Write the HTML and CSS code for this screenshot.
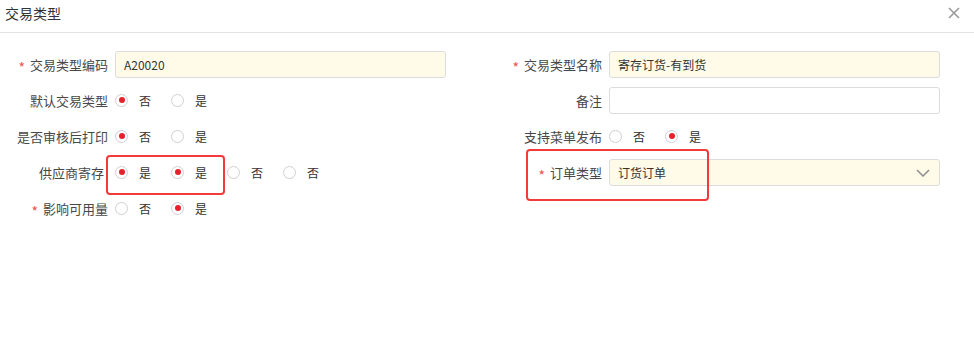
FILE: index.html
```html
<!DOCTYPE html>
<html>
<head lang="zh">
    <meta charset="UTF-8">
    <title>交易类型</title>
    <link rel="stylesheet" href="styles.css">
</head>
<body>
<div class="dialog">
    <div class="dialog-head">
        <span class="dialog-title">交易类型</span>
        <span class="close">
            <svg width="12" height="12" viewBox="0 0 12 12"><path d="M1 1 L11 11 M11 1 L1 11" stroke="#9a9a9a" stroke-width="1.6" fill="none"/></svg>
        </span>
    </div>
    <div class="form">
        <div class="field">
            <label class="lbl"><i class="req">*</i>交易类型编码</label>
            <div class="input">A20020</div>
        </div>
        <div class="field">
            <label class="lbl"><i class="req">*</i>交易类型名称</label>
            <div class="input">寄存订货-有到货</div>
        </div>

        <div class="field">
            <label class="lbl">默认交易类型</label>
            <div class="radios">
                <span class="opt"><span class="radio on"></span>否</span>
                <span class="opt"><span class="radio"></span>是</span>
            </div>
        </div>
        <div class="field">
            <label class="lbl">备注</label>
            <div class="input plain"></div>
        </div>

        <div class="field">
            <label class="lbl">是否审核后打印</label>
            <div class="radios">
                <span class="opt"><span class="radio on"></span>否</span>
                <span class="opt"><span class="radio"></span>是</span>
            </div>
        </div>
        <div class="field">
            <label class="lbl">支持菜单发布</label>
            <div class="radios">
                <span class="opt"><span class="radio"></span>否</span>
                <span class="opt"><span class="radio on"></span>是</span>
            </div>
        </div>

        <div class="field">
            <label class="lbl short">供应商寄存</label>
            <div class="radios">
                <span class="opt"><span class="radio on"></span>是</span>
                <span class="opt"><span class="radio on"></span>是</span>
                <span class="opt"><span class="radio"></span>否</span>
                <span class="opt"><span class="radio"></span>否</span>
            </div>
        </div>
        <div class="field">
            <label class="lbl"><i class="req">*</i>订单类型</label>
            <div class="input select">订货订单
                <svg class="caret" width="14" height="8" viewBox="0 0 14 8"><path d="M1 1 L7 7 L13 1" stroke="#8c8c8c" stroke-width="1.5" fill="none"/></svg>
            </div>
        </div>

        <div class="field">
            <label class="lbl"><i class="req">*</i>影响可用量</label>
            <div class="radios">
                <span class="opt"><span class="radio"></span>否</span>
                <span class="opt"><span class="radio on"></span>是</span>
            </div>
        </div>

        <div class="mark mark-left"></div>
        <div class="mark mark-right"></div>
    </div>
</div>
</body>
</html>
```

FILE: styles.css
```css
body {
    margin: 0px;
    background: #fff;
    font-family: "Noto Sans CJK SC", "Liberation Sans", sans-serif;
    color: #333;
}
.dialog {
    width: 974px;
    height: 337px;
    background: #fff;
}
.dialog-head {
    height: 33px;
    box-sizing: border-box;
    border-bottom: 1px solid #e3e3e3;
    display: flex;
    justify-content: space-between;
    align-items: flex-start;
    padding: 4px 14px 0 5px;
}
.dialog-title {
    font-size: 14px;
    line-height: 18px;
    color: #333;
}
.close {
    margin-top: 3px;
    line-height: 0;
}
.form {
    position: relative;
    display: grid;
    grid-template-columns: 494px 494px;
    grid-auto-rows: 36px;
    padding-top: 13px;
}
.field {
    display: flex;
    align-items: center;
}
.lbl {
    width: 108px;
    margin-right: 7px;
    text-align: right;
    font-size: 13px;
    color: #484848;
    white-space: nowrap;
}
.lbl.short {
    width: 104px;
    margin-right: 11px;
}
.req {
    display: inline-block;
    position: relative;
    top: 3px;
    font-style: normal;
    color: #f0504f;
    font-size: 14px;
    line-height: 13px;
    margin-right: 5px;
}
.input {
    width: 331px;
    height: 27px;
    box-sizing: border-box;
    border: 1px solid #dcdcdc;
    border-radius: 3px;
    background: #fffbe8;
    font-size: 12px;
    line-height: 25px;
    padding-left: 8px;
    color: #333;
}
.input.plain {
    background: #fff;
}
.select {
    position: relative;
}
.select .caret {
    position: absolute;
    right: 9px;
    top: 9px;
}
.radios {
    display: flex;
    align-items: center;
}
.opt {
    display: inline-flex;
    align-items: center;
    width: 56px;
    font-size: 12px;
    color: #333;
}
.radio {
    width: 13px;
    height: 13px;
    box-sizing: border-box;
    border: 1px solid #cfcfcf;
    border-radius: 50%;
    margin-right: 11px;
    display: inline-flex;
    align-items: center;
    justify-content: center;
}
.radio.on::after {
    content: "";
    width: 6px;
    height: 6px;
    border-radius: 50%;
    background: #e8202e;
}
.mark {
    position: absolute;
    border: 2px solid #f23a3a;
    border-radius: 4px;
}
.mark-left {
    left: 106px;
    top: 122px;
    width: 115px;
    height: 36px;
}
.mark-right {
    left: 526px;
    top: 116px;
    width: 179px;
    height: 48px;
}
```
